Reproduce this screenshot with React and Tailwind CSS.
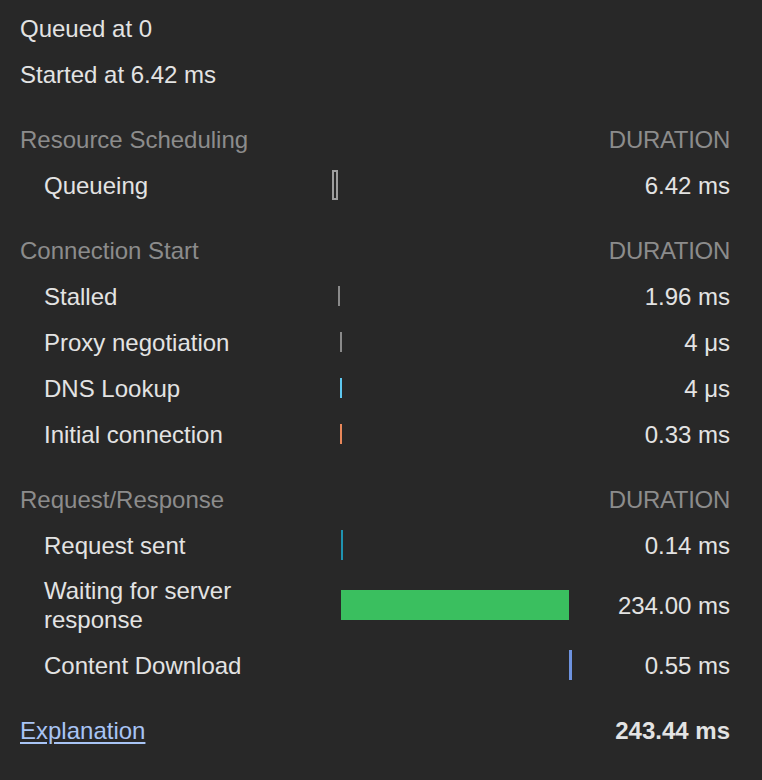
import React from "react";

function Row({ label, bar, value, tall = false }) {
  return (
    <div
      className={
        "grid grid-cols-[312px_240px_1fr] items-center leading-[29px] " +
        (tall ? "h-[74px]" : "h-[46px]")
      }
    >
      <div className="pl-6 pr-2">{label}</div>
      <div className="flex items-center">{bar}</div>
      <div className="text-right">{value}</div>
    </div>
  );
}

function Header({ title }) {
  return (
    <div className="mt-[19px] grid h-[46px] grid-cols-[312px_240px_1fr] items-center leading-[29px] text-[#8c8c8c]">
      <div>{title}</div>
      <div></div>
      <div className="text-right tracking-[-0.3px]">DURATION</div>
    </div>
  );
}

export default function App() {
  return (
    <div
      className="min-h-[780px] w-[762px] bg-[#282828] pl-5 pr-8 pt-[5px] text-[24px] text-[#e3e3e3]"
      style={{ fontFamily: '"Liberation Sans", Arial, sans-serif' }}
    >
      <div className="flex h-[46px] items-center leading-[29px]">Queued at 0</div>
      <div className="flex h-[46px] items-center leading-[29px]">Started at 6.42 ms</div>

      <Header title="Resource Scheduling" />
      <Row
        label="Queueing"
        value="6.42 ms"
        bar={<div className="h-[30px] w-[6px] border-2 border-[#9e9e9e]" />}
      />

      <Header title="Connection Start" />
      <Row
        label="Stalled"
        value="1.96 ms"
        bar={<div className="ml-[6px] h-[20px] w-[2px] bg-[#8a8a8a]" />}
      />
      <Row
        label="Proxy negotiation"
        value="4 μs"
        bar={<div className="ml-[8px] h-[20px] w-[2px] bg-[#8a8a8a]" />}
      />
      <Row
        label="DNS Lookup"
        value="4 μs"
        bar={<div className="ml-[8px] h-[20px] w-[2px] bg-[#5ec8f0]" />}
      />
      <Row
        label="Initial connection"
        value="0.33 ms"
        bar={<div className="ml-[8px] h-[20px] w-[2px] bg-[#e8875a]" />}
      />

      <Header title="Request/Response" />
      <Row
        label="Request sent"
        value="0.14 ms"
        bar={<div className="ml-[9px] h-[30px] w-[2px] bg-[#1f93b0]" />}
      />
      <Row
        tall
        label="Waiting for server response"
        value="234.00 ms"
        bar={<div className="ml-[9px] h-[30px] w-[228px] bg-[#3abf5f]" />}
      />
      <Row
        label="Content Download"
        value="0.55 ms"
        bar={<div className="ml-[237px] h-[30px] w-[3px] bg-[#6e93e0]" />}
      />

      <div className="mt-[19px] flex h-[46px] items-center justify-between leading-[29px]">
        <a href="#" className="text-[#a8c4f5] underline underline-offset-[3px]">
          Explanation
        </a>
        <span className="font-bold">243.44 ms</span>
      </div>
    </div>
  );
}
